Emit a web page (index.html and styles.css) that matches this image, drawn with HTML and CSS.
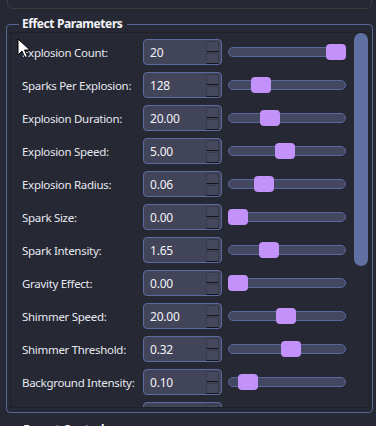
FILE: index.html
```html
<!DOCTYPE html>
<html>
<head>
    <title>Effect Parameters</title>
    <link rel="stylesheet" href="styles.css">
</head>
<body>
    <div class="top-panel"></div>

    <fieldset class="group">
        <legend>Effect Parameters</legend>
        <div class="scroll-frame">
            <div class="rows">
                <div class="row">
                    <span class="label">Explosion Count:</span>
                    <div class="spin"><span>20</span><div class="spin-btns"><i></i><i></i></div></div>
                    <div class="slider"><div class="handle" style="--pos: 1"></div></div>
                </div>
                <div class="row">
                    <span class="label">Sparks Per Explosion:</span>
                    <div class="spin"><span>128</span><div class="spin-btns"><i></i><i></i></div></div>
                    <div class="slider"><div class="handle" style="--pos: 0.235"></div></div>
                </div>
                <div class="row">
                    <span class="label">Explosion Duration:</span>
                    <div class="spin"><span>20.00</span><div class="spin-btns"><i></i><i></i></div></div>
                    <div class="slider"><div class="handle" style="--pos: 0.33"></div></div>
                </div>
                <div class="row">
                    <span class="label">Explosion Speed:</span>
                    <div class="spin"><span>5.00</span><div class="spin-btns"><i></i><i></i></div></div>
                    <div class="slider"><div class="handle" style="--pos: 0.475"></div></div>
                </div>
                <div class="row">
                    <span class="label">Explosion Radius:</span>
                    <div class="spin"><span>0.06</span><div class="spin-btns"><i></i><i></i></div></div>
                    <div class="slider"><div class="handle" style="--pos: 0.27"></div></div>
                </div>
                <div class="row">
                    <span class="label">Spark Size:</span>
                    <div class="spin"><span>0.00</span><div class="spin-btns"><i></i><i></i></div></div>
                    <div class="slider"><div class="handle" style="--pos: 0"></div></div>
                </div>
                <div class="row">
                    <span class="label">Spark Intensity:</span>
                    <div class="spin"><span>1.65</span><div class="spin-btns"><i></i><i></i></div></div>
                    <div class="slider"><div class="handle" style="--pos: 0.32"></div></div>
                </div>
                <div class="row">
                    <span class="label">Gravity Effect:</span>
                    <div class="spin"><span>0.00</span><div class="spin-btns"><i></i><i></i></div></div>
                    <div class="slider"><div class="handle" style="--pos: 0"></div></div>
                </div>
                <div class="row">
                    <span class="label">Shimmer Speed:</span>
                    <div class="spin"><span>20.00</span><div class="spin-btns"><i></i><i></i></div></div>
                    <div class="slider"><div class="handle" style="--pos: 0.485"></div></div>
                </div>
                <div class="row">
                    <span class="label">Shimmer Threshold:</span>
                    <div class="spin"><span>0.32</span><div class="spin-btns"><i></i><i></i></div></div>
                    <div class="slider"><div class="handle" style="--pos: 0.54"></div></div>
                </div>
                <div class="row">
                    <span class="label">Background Intensity:</span>
                    <div class="spin"><span>0.10</span><div class="spin-btns"><i></i><i></i></div></div>
                    <div class="slider"><div class="handle" style="--pos: 0.1"></div></div>
                </div>
                <div class="row">
                    <span class="label"></span>
                    <div class="spin"><span></span><div class="spin-btns"><i></i><i></i></div></div>
                    <div class="slider"><div class="handle" style="--pos: 0"></div></div>
                </div>
            </div>
            <div class="scrollbar"><div class="thumb"></div></div>
        </div>
    </fieldset>

    <div class="next-title">Export Controls</div>

    <!-- mouse pointer -->
    <svg class="cursor" width="14" height="21" viewBox="0 0 14 21">
        <path d="M1 1 L1 17 L5 13 L8 19.5 L10.5 18.5 L7.5 12 L13 12 Z" fill="#fff" stroke="#000" stroke-width="1" stroke-linejoin="round"/>
    </svg>
</body>
</html>
```

FILE: styles.css
```css
* {
    box-sizing: border-box;
}

body {
    margin: 0;
    height: 426px;
    overflow: hidden;
    background: #262833;
    font-family: 'Noto Sans', 'Open Sans', sans-serif;
    color: #e6e9f2;
    position: relative;
}

.top-panel {
    height: 9px;
    margin: 0 4px 0 7px;
    border: 1px solid #3a3b3a;
    border-top: none;
    border-radius: 0 0 5px 5px;
}

.group {
    margin: 9px 3px 0 6px;
    padding: 2px 2px 4px 3px;
    border: 1px solid #5a6796;
    border-radius: 4px;
    min-width: 0;
}

.group legend {
    margin-left: 9px;
    padding: 0 5px 0 3px;
    font-size: 12px;
    font-weight: bold;
    letter-spacing: -0.4px;
    color: #f3f4f8;
    line-height: 12px;
}

.scroll-frame {
    display: flex;
    height: 376px;
    overflow: hidden;
    border: 1px solid #1f2028;
    background: #262833;
}

.rows {
    flex: 1;
    display: flex;
    flex-direction: column;
    gap: 7px;
    padding: 6px 0 0 11px;
}

.row {
    display: flex;
    align-items: center;
    height: 26px;
    flex-shrink: 0;
}

.label {
    width: 121px;
    font-size: 11.5px;
    letter-spacing: -0.3px;
    white-space: nowrap;
}

.spin {
    width: 79px;
    height: 26px;
    display: flex;
    align-items: center;
    justify-content: space-between;
    padding: 0 1px 0 6px;
    background: #424459;
    border: 1px solid #5d6aa0;
    border-radius: 4px;
    font-size: 12px;
    letter-spacing: -0.2px;
    color: #f2f3f7;
}

.spin-btns {
    display: flex;
    flex-direction: column;
    gap: 1px;
    margin-right: 1px;
}

.spin-btns i {
    display: block;
    width: 13px;
    height: 11px;
    background: #45475c;
    border: 1px solid #383a4c;
    border-bottom-color: #14151b;
}

.slider {
    position: relative;
    width: 118px;
    height: 10px;
    margin-left: 6px;
    background: #444760;
    border: 1px solid #5b68a0;
    border-radius: 5px;
}

.handle {
    position: absolute;
    top: -4px;
    left: calc((100% - 18px) * var(--pos) - 1px);
    width: 20px;
    height: 16px;
    background: #c291fa;
    border-radius: 4px;
}

.scrollbar {
    width: 14px;
    margin-right: 1px;
}

.thumb {
    height: 233px;
    background: #6070a3;
    border-radius: 7px;
}

.next-title {
    margin: 8px 0 0 23px;
    font-size: 12px;
    font-weight: bold;
    letter-spacing: -0.4px;
    color: #f3f4f8;
}

.cursor {
    position: absolute;
    left: 17px;
    top: 38px;
}
```
